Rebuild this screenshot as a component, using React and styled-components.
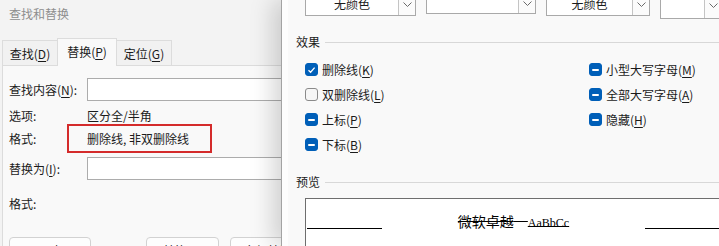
import React from 'react'
import styled, { createGlobalStyle } from 'styled-components'

const GlobalStyle = createGlobalStyle`
  html, body {
    margin: 0;
    padding: 0;
  }
  body {
    width: 719px;
    height: 246px;
    overflow: hidden;
    background: #f3f3f3;
    color: #1b1b1b;
    font-family: "Noto Sans CJK SC", "Noto Sans", sans-serif;
    font-size: 12px;
  }
  u {
    text-underline-offset: 2px;
  }
`

const Desktop = styled.div`
  display: flex;
  width: 719px;
  height: 246px;
  overflow: hidden;
`

/* ---------- 查找和替换 ---------- */

const FindDialog = styled.div`
  flex: none;
  width: 281px;
  display: flex;
  flex-direction: column;
  overflow: hidden;
  background: #f3f3f3;

  & > * {
    flex-shrink: 0;
  }
`

const TitleBar = styled.div`
  height: 28px;
  display: flex;
  align-items: center;
  padding-left: 9px;
  color: #8e8e8e;
  line-height: 16px;
`

const TabStrip = styled.div`
  height: 37px;
  display: flex;
  align-items: flex-end;
  padding-left: 3px;
`

const Tab = styled.div`
  box-sizing: border-box;
  width: ${p => p.$w}px;
  height: ${p => (p.$active ? 28 : 25)}px;
  margin-left: -1px;
  margin-bottom: ${p => (p.$active ? '-1px' : '0')};
  display: flex;
  align-items: center;
  justify-content: center;
  padding-bottom: ${p => (p.$active ? 3 : 0)}px;
  border: 1px solid #dcdcdc;
  border-bottom: none;
  background: ${p => (p.$active ? '#f9f9f9' : '#f1f1f1')};
  position: relative;
  z-index: ${p => (p.$active ? 1 : 0)};
`

const TabPanel = styled.div`
  flex: 1 0 auto;
  margin-left: 2px;
  padding: 12px 0 0 6px;
  display: flex;
  flex-direction: column;
  background: #f9f9f9;
  border-top: 1px solid #dcdcdc;
  border-left: 1px solid #dcdcdc;
`

const FieldRow = styled.div`
  flex: none;
  display: flex;
  align-items: center;
  margin-top: ${p => p.$gap || 0}px;
`

const Label = styled.div`
  flex: none;
  width: ${p => p.$w || 78}px;
  line-height: 16px;
`

const Value = styled.div`
  line-height: 16px;
`

const TextInput = styled.div`
  flex: 1;
  height: 23px;
  box-sizing: border-box;
  background: #fff;
  border: 1px solid #acacac;
  border-right: none;
`

const Highlight = styled.div`
  box-sizing: border-box;
  width: 145px;
  height: 29px;
  padding-left: 18px;
  display: flex;
  align-items: center;
  border: 2px solid #d42b2b;
`

const ButtonRow = styled.div`
  flex: none;
  display: flex;
  margin-top: 25px;
`

const Button = styled.div`
  flex: none;
  box-sizing: border-box;
  width: ${p => p.$w}px;
  height: 26px;
  margin-left: ${p => p.$gap || 0}px;
  display: flex;
  align-items: center;
  justify-content: center;
  background: #fdfdfd;
  border: 1px solid #d2d2d2;
  border-radius: 4px;
  white-space: nowrap;
`

/* ---------- 字体 ---------- */

const FontDialog = styled.div`
  flex: none;
  width: 445px;
  position: relative;
  display: flex;
  flex-direction: column;
  padding-left: 14px;
  background: #f9f9f9;
  border-left: 1px solid #a3a3a3;
  box-shadow: -8px 0 22px rgba(0, 0, 0, 0.17), inset 6px 0 0 #fdfdfd;

  & > * {
    flex-shrink: 0;
  }
`

const ComboRow = styled.div`
  display: flex;
  align-items: flex-start;
  gap: 10px;
  margin-top: -8px;
  padding-left: 9px;
`

const Combo = styled.div`
  flex: none;
  box-sizing: border-box;
  width: ${p => p.$w}px;
  height: ${p => p.$h}px;
  display: flex;
  background: #fff;
  border: 1px solid #a9a9a9;
`

const ComboText = styled.div`
  flex: 1;
  display: flex;
  align-items: center;
  justify-content: center;
  line-height: 16px;
`

const ComboArrow = styled.div`
  flex: none;
  width: 16px;
  display: flex;
  align-items: center;
  justify-content: center;
  background: #fbfbfb;
  border-left: 1px solid #c4c4c4;
`

const SectionHead = styled.div`
  display: flex;
  align-items: center;
  gap: 5px;
  height: 16px;
  margin-top: ${p => p.$gap}px;
  line-height: 16px;
`

const SectionRule = styled.div`
  flex: 1;
  height: 1px;
  background: #d8d8d8;
`

const EffectGrid = styled.div`
  display: grid;
  grid-template-columns: 284px 1fr;
  grid-template-rows: repeat(4, 25px);
  grid-auto-flow: column;
  margin-top: 7px;
  padding-left: 9px;
`

const CheckItem = styled.div`
  display: flex;
  align-items: center;
  gap: 4px;
  line-height: 16px;
`

const Box = styled.div`
  flex: none;
  box-sizing: border-box;
  width: 13px;
  height: 13px;
  display: flex;
  align-items: center;
  justify-content: center;
  border-radius: 3px;
  background: ${p => (p.$state === 'off' ? '#f6f6f6' : '#005fb8')};
  border: 1px solid ${p => (p.$state === 'off' ? '#8a8a8a' : '#005fb8')};
`

const Dash = styled.div`
  width: 7px;
  height: 2px;
  border-radius: 1px;
  background: #fff;
`

const PreviewBox = styled.div`
  box-sizing: border-box;
  width: 416px;
  height: 64px;
  margin: 8px 0 0 9px;
  padding: 17px 1px 0;
  background: #fff;
  border: 1px solid #6e6e6e;
`

const PreviewLine = styled.div`
  display: flex;
  align-items: flex-end;
  height: 14px;
`

const Rule = styled.div`
  flex: none;
  width: ${p => p.$w}px;
  height: 1px;
  margin-bottom: 1px;
  background: #000;
`

const Sample = styled.div`
  flex: 1;
  text-align: center;
  font-size: 14px;
  line-height: 14px;
  color: #000;
  text-decoration: line-through;
  white-space: nowrap;
`

const Latin = styled.span`
  font-family: "Liberation Serif", serif;
  font-size: 12px;
`

function Chevron() {
  return (
    <svg width="9" height="5" viewBox="0 0 9 5">
      <path d="M0.5 0.5 L4.5 4.5 L8.5 0.5" fill="none" stroke="#6a6a6a" strokeWidth="1" />
    </svg>
  )
}

function Check({ state, children }) {
  return (
    <CheckItem>
      <Box $state={state}>
        {state === 'on' && (
          <svg width="9" height="8" viewBox="0 0 9 8">
            <path d="M1.5 4.2 L3.6 6.2 L7.6 1.6" fill="none" stroke="#fff" strokeWidth="1.3" />
          </svg>
        )}
        {state === 'mixed' && <Dash />}
      </Box>
      <span>{children}</span>
    </CheckItem>
  )
}

export default function App() {
  return (
    <>
      <GlobalStyle />
      <Desktop>
        <FindDialog>
          <TitleBar>查找和替换</TitleBar>
          <TabStrip>
            <Tab $w={56}>查找(<u>D</u>)</Tab>
            <Tab $w={60} $active>替换(<u>P</u>)</Tab>
            <Tab $w={56}>定位(<u>G</u>)</Tab>
          </TabStrip>
          <TabPanel>
            <FieldRow>
              <Label>查找内容(<u>N</u>):</Label>
              <TextInput />
            </FieldRow>
            <FieldRow $gap={7}>
              <Label>选项:</Label>
              <Value>区分全/半角</Value>
            </FieldRow>
            <FieldRow>
              <Label $w={58}>格式:</Label>
              <Highlight>删除线, 非双删除线</Highlight>
            </FieldRow>
            <FieldRow $gap={4}>
              <Label>替换为(<u>I</u>):</Label>
              <TextInput />
            </FieldRow>
            <FieldRow $gap={16}>
              <Label>格式:</Label>
            </FieldRow>
            <ButtonRow>
              <Button $w={82}>&lt;&lt; 更少(<u>L</u>)</Button>
              <Button $w={73} $gap={55}>替换(<u>R</u>)</Button>
              <Button $w={90} $gap={11}>全部替换(<u>A</u>)</Button>
            </ButtonRow>
          </TabPanel>
        </FindDialog>

        <FontDialog>
          <ComboRow>
            <Combo $w={111} $h={24}>
              <ComboText>无颜色</ComboText>
              <ComboArrow><Chevron /></ComboArrow>
            </Combo>
            <Combo $w={110} $h={22}>
              <ComboText />
              <ComboArrow><Chevron /></ComboArrow>
            </Combo>
            <Combo $w={104} $h={24}>
              <ComboText>无颜色</ComboText>
              <ComboArrow><Chevron /></ComboArrow>
            </Combo>
            <Combo $w={62} $h={27}>
              <ComboText />
              <ComboArrow><Chevron /></ComboArrow>
            </Combo>
          </ComboRow>

          <SectionHead $gap={15}>
            <span>效果</span>
            <SectionRule />
          </SectionHead>
          <EffectGrid>
            <Check state="on">删除线(<u>K</u>)</Check>
            <Check state="off">双删除线(<u>L</u>)</Check>
            <Check state="mixed">上标(<u>P</u>)</Check>
            <Check state="mixed">下标(<u>B</u>)</Check>
            <Check state="mixed">小型大写字母(<u>M</u>)</Check>
            <Check state="mixed">全部大写字母(<u>A</u>)</Check>
            <Check state="mixed">隐藏(<u>H</u>)</Check>
          </EffectGrid>

          <SectionHead $gap={17}>
            <span>预览</span>
            <SectionRule />
          </SectionHead>
          <PreviewBox>
            <PreviewLine>
              <Rule $w={75} />
              <Sample>
                微软卓越{'\u3000'}<Latin>AaBbCc</Latin>
              </Sample>
              <Rule $w={74} />
            </PreviewLine>
          </PreviewBox>
        </FontDialog>
      </Desktop>
    </>
  )
}
